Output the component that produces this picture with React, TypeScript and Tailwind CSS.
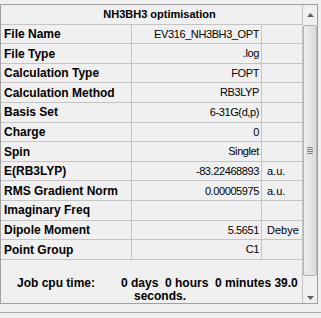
const ROWS: [string, string, string][] = [
  ["File Name", "EV316_NH3BH3_OPT", ""],
  ["File Type", ".log", ""],
  ["Calculation Type", "FOPT", ""],
  ["Calculation Method", "RB3LYP", ""],
  ["Basis Set", "6-31G(d,p)", ""],
  ["Charge", "0", ""],
  ["Spin", "Singlet", ""],
  ["E(RB3LYP)", "-83.22468893", "a.u."],
  ["RMS Gradient Norm", "0.00005975", "a.u."],
  ["Imaginary Freq", "", ""],
  ["Dipole Moment", "5.5651", "Debye"],
  ["Point Group", "C1", ""],
];

function Scrollbar() {
  return (
    <div className="flex w-[14px] flex-col items-center">
      <div className="flex h-[20px] w-full items-center justify-center">
        <svg width="7" height="4" viewBox="0 0 7 4">
          <path d="M3.5 0 L7 4 L0 4 Z" fill="#606060" />
        </svg>
      </div>
      <div className="flex h-[251px] w-[14px] items-center justify-center rounded-[2px] border border-[#b5b5b5] bg-gradient-to-r from-[#ededed] to-[#dcdcdc]">
        <div className="flex flex-col gap-[1px]">
          <div className="h-px w-[6px] bg-[#808080]" />
          <div className="h-px w-[6px] bg-[#808080]" />
          <div className="h-px w-[6px] bg-[#808080]" />
          <div className="h-px w-[6px] bg-[#808080]" />
        </div>
      </div>
      <div className="flex flex-1 items-end justify-center pb-[3px]">
        <svg width="7" height="4" viewBox="0 0 7 4">
          <path d="M0 0 L7 0 L3.5 4 Z" fill="#606060" />
        </svg>
      </div>
    </div>
  );
}

export default function App() {
  return (
    <div
      className="h-[318px] w-[321px] bg-[#f0f0f0] pt-[4px] text-black"
      style={{ fontFamily: '"Liberation Sans", Arial, sans-serif' }}
    >
      <div className="flex h-[300px] w-[318px] border border-[#a0a0a0]">
        <div className="flex w-[302px] flex-col border-r border-[#c4c4c4]">
          <div className="flex h-[20px] items-center justify-center border-b border-[#c4c4c4] pl-[16px] text-[11px] font-bold">
            NH3BH3 optimisation
          </div>
          {ROWS.map(([label, value, unit]) => (
            <div key={label} className="grid h-[20px] grid-cols-[131px_130px_39px] border-b border-[#c4c4c4]">
              <div className="flex items-center whitespace-nowrap border-r border-[#c4c4c4] pl-[3px] text-[12px] font-bold">
                {label}
              </div>
              <div className="flex items-center justify-end whitespace-nowrap border-r border-[#c4c4c4] pr-[2px] text-[11px] tracking-[-0.4px]">
                {value}
              </div>
              <div className="flex items-center whitespace-nowrap pl-[5px] text-[11px]">{unit}</div>
            </div>
          ))}
          <div className="flex flex-col pt-[17px] text-[12px] font-bold leading-[13px]">
            <div className="flex whitespace-pre">
              <span className="w-[120px] pl-[16px]">Job cpu time:</span>
              <span>0 days  0 hours  0 minutes 39.0</span>
            </div>
            <div className="whitespace-pre pl-[133px]">seconds.</div>
          </div>
        </div>
        <Scrollbar />
      </div>
      <div className="mt-[8px] h-px w-full bg-[#a8a8a8]" />
    </div>
  );
}
